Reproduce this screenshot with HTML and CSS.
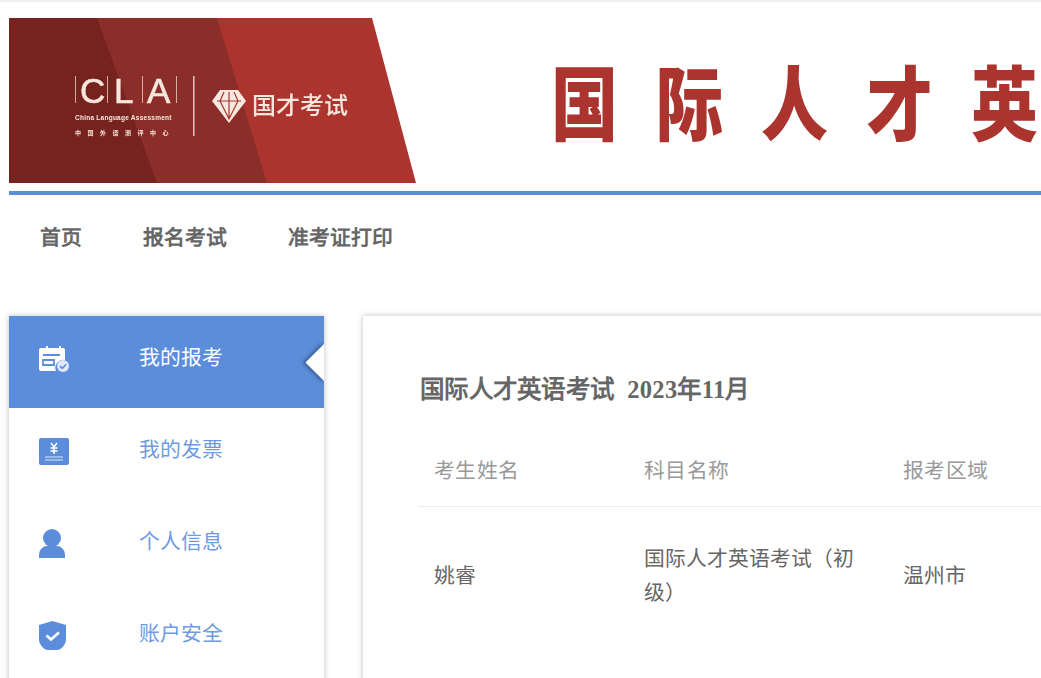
FILE: index.html
```html
<!DOCTYPE html>
<html lang="zh-CN">
<head>
<meta charset="utf-8">
<title>我的报考</title>
<link rel="stylesheet" href="styles.css">
</head>
<body>
<div class="page">
  <header class="banner">
    <svg class="logo" width="407" height="165" viewBox="0 0 407 165">
      <defs><filter id="soft"><feGaussianBlur stdDeviation="0.45"/></filter></defs>
      <polygon points="0,0 363,0 407,165 0,165" fill="#ab342e"/>
      <polygon points="0,0 208,0 258,165 0,165" fill="#8b2e2a"/>
      <polygon points="0,0 88,0 148,165 0,165" fill="#76221f"/>
      <g filter="url(#soft)" fill="#f7e6dc">
        <rect x="66" y="58" width="1" height="27" opacity=".7"/>
        <rect x="98" y="58" width="1" height="27" opacity=".7"/>
        <rect x="133" y="58" width="1" height="27" opacity=".7"/>
        <rect x="167" y="58" width="1" height="27" opacity=".7"/>
        <rect x="184" y="58" width="1.500" height="60" opacity=".8"/>
        <text x="71" y="85" class="logo-c">C</text>
        <text x="105" y="85" class="logo-c">L</text>
        <text x="138" y="85" class="logo-c">A</text>
        <text x="66" y="102" class="logo-en">China Language Assessment</text>
        <text x="66" y="117" class="logo-zh">中国外语测评中心</text>
        <path d="M203 83l8-11h18l8 11-17 22z" fill="#f8e9e0"/>
        <path d="M208 83h24M215 74l-4 9 9 18 9-18-4-9M220 74v26" fill="none" stroke="#ab342e" stroke-width="1.200"/>
        <text x="243" y="96" class="logo-cn">国才考试</text>
      </g>
    </svg>
    <h1 class="banner-title">国际人才英</h1>
  </header>
  <div class="rule"></div>
  <nav class="nav">
    <a class="nav-link">首页</a>
    <a class="nav-link">报名考试</a>
    <a class="nav-link">准考证打印</a>
  </nav>
  <main class="main">
    <aside class="sidebar">
      <a class="side-item active">
        <svg class="side-icon" width="32" height="28" viewBox="0 0 32 28" preserveAspectRatio="xMinYMid">
          <path d="M4 3h3V1h2v2h11V1h2v2h2a2 2 0 0 1 2 2v10a8 8 0 0 0-9 11H2a2 2 0 0 1-2-2V5a2 2 0 0 1 2-2z" fill="#fff"/>
          <path d="M4 10h17M4 15h11v5H4z" fill="none" stroke="#5b8ddb" stroke-width="1.800"/>
          <circle cx="24" cy="21" r="6" fill="#dfe9f8"/>
          <path d="M21 21l2.300 2.300 4-4" fill="none" stroke="#5b8ddb" stroke-width="1.600"/>
        </svg>
        <span class="side-label">我的报考</span>
        <i class="wedge"></i>
      </a>
      <a class="side-item">
        <svg class="side-icon" width="32" height="27" viewBox="0 0 32 27" preserveAspectRatio="xMinYMid">
          <rect width="30" height="27" rx="2" fill="#5b8ddb"/>
          <path d="M12 5l3 4 3-4M15 9v7M11.500 10h7M11.500 13h7" fill="none" stroke="#fff" stroke-width="1.600"/>
          <path d="M6 19h18M6 22h18" stroke="#dfe9f8" stroke-width="1.200"/>
        </svg>
        <span class="side-label">我的发票</span>
      </a>
      <a class="side-item">
        <svg class="side-icon" width="32" height="29" viewBox="0 0 32 29" preserveAspectRatio="xMinYMid">
          <circle cx="13" cy="9" r="9" fill="#5b8ddb"/>
          <path d="M0 29v-3c0-6 5-9 8-9h10c3 0 8 3 8 9v3z" fill="#5b8ddb"/>
        </svg>
        <span class="side-label">个人信息</span>
      </a>
      <a class="side-item">
        <svg class="side-icon" width="32" height="29" viewBox="0 0 32 29" preserveAspectRatio="xMinYMid">
          <path d="M13.500 0L27 4v14c0 6-5 11-9 11H9c-4 0-9-5-9-11V4z" fill="#5b8ddb"/>
          <path d="M7.500 14.500l4.500 4 8-7" fill="none" stroke="#fff" stroke-width="2.600"/>
        </svg>
        <span class="side-label">账户安全</span>
      </a>
    </aside>
    <section class="panel">
      <h2 class="panel-title">国际人才英语考试&nbsp; 2023年11月</h2>
      <table class="table">
        <colgroup><col class="col-a"><col class="col-b"><col class="col-c"></colgroup>
        <thead>
          <tr><th>考生姓名</th><th>科目名称</th><th>报考区域</th></tr>
        </thead>
        <tbody>
          <tr><td>姚睿</td><td>国际人才英语考试（初级）</td><td>温州市</td></tr>
        </tbody>
      </table>
    </section>
  </main>
</div>
</body>
</html>
```
FILE: styles.css
```css
* { box-sizing: border-box; }
html, body { margin: 0; height: 100%; background: #fff; }
body { font-family: "Liberation Serif", serif; color: #666; }
.page {
  width: 100%;
  height: 100vh;
  overflow: hidden;
  border-top: 2px solid #eeeeee;
  padding: 16px 0 0 9px;
}
.banner { display: flex; align-items: center; height: 165px; overflow: hidden; white-space: nowrap; }
.logo { flex: none; display: block; }
.logo-c { font: 400 35px "Liberation Sans", sans-serif; stroke: #f7e6dc; stroke-width: .6px; }
.logo-en { font: 700 6.500px "Liberation Sans", sans-serif; letter-spacing: .25px; }
.logo-zh { font: 700 6px "Noto Sans CJK SC", sans-serif; letter-spacing: 6.500px; }
.logo-cn { font: 500 24px "Noto Sans CJK SC", sans-serif; letter-spacing: 0; }
.banner-title {
  flex: none;
  margin: 0 0 4px 135px;
  font: 900 67px/1 "Noto Sans CJK SC", sans-serif;
  letter-spacing: 38px;
  color: #ab342e;
  transform: scaleY(1.2);
}
.rule { height: 4px; margin-top: 8px; background: #5b8ddb; }
.nav { display: flex; gap: 61px; padding: 29px 0 0 31px; height: 121px; }
.nav-link { font-size: 20.800px; line-height: 28px; font-weight: 700; color: #666; }
.main { display: flex; align-items: flex-start; gap: 39px; }
.sidebar { flex: none; width: 315px; height: 500px; background: #fff; box-shadow: 0 0 6px rgba(0,0,0,.25); }
.side-item {
  position: relative;
  display: flex;
  align-items: center;
  height: 92px;
  overflow: hidden;
  font-size: 20.800px;
  color: #6f9ae0;
  padding: 0 0 6px 30px;
}
.side-item.active { background: #5b8ddb; color: #fff; }
.side-icon { flex: none; margin-right: 68px; }
.side-label { margin-bottom: 6px; }
.wedge {
  position: absolute;
  right: -14px;
  top: 33px;
  width: 27px;
  height: 27px;
  background: #fff;
  transform: rotate(45deg);
  box-shadow: -2px 2px 4px rgba(0,0,0,.35);
}
.panel { flex: none; width: 1000px; height: 600px; background: #fff; box-shadow: 0 0 6px rgba(0,0,0,.25); padding: 58px 0 0 55px; }
.panel-title { margin: 0 0 27px 2px; font-size: 24.500px; line-height: 32px; font-weight: 700; color: #666; letter-spacing: .3px; }
.table { width: 730px; table-layout: fixed; border-collapse: collapse; font-size: 20.800px; }
.col-a { width: 210px; }
.col-b { width: 259px; }
.col-c { width: 261px; }
.table th { text-align: left; font-weight: 400; color: #999; padding: 0 16px; height: 73px; border-bottom: 1px solid #e8ecf5; letter-spacing: .4px; }
.table td { color: #666; padding: 35px 16px; line-height: 34px; }
```
